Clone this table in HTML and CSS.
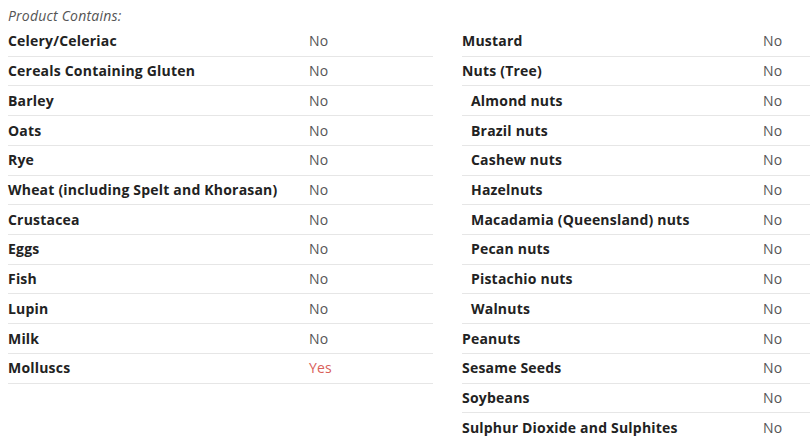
FILE: index.html
```html
<!DOCTYPE html>
<html>
<head>
<meta charset="utf-8">
<link rel="stylesheet" href="styles.css">
</head>
<body>
<div class="allergens">
  <div class="heading">Product Contains:</div>
  <div class="columns">
    <div class="table">
      <div class="row"><span class="label">Celery/Celeriac</span><span class="value">No</span></div>
      <div class="row"><span class="label">Cereals Containing Gluten</span><span class="value">No</span></div>
      <div class="row"><span class="label">Barley</span><span class="value">No</span></div>
      <div class="row"><span class="label">Oats</span><span class="value">No</span></div>
      <div class="row"><span class="label">Rye</span><span class="value">No</span></div>
      <div class="row"><span class="label">Wheat (including Spelt and Khorasan)</span><span class="value">No</span></div>
      <div class="row"><span class="label">Crustacea</span><span class="value">No</span></div>
      <div class="row"><span class="label">Eggs</span><span class="value">No</span></div>
      <div class="row"><span class="label">Fish</span><span class="value">No</span></div>
      <div class="row"><span class="label">Lupin</span><span class="value">No</span></div>
      <div class="row"><span class="label">Milk</span><span class="value">No</span></div>
      <div class="row"><span class="label">Molluscs</span><span class="value yes">Yes</span></div>
    </div>
    <div class="table">
      <div class="row"><span class="label">Mustard</span><span class="value">No</span></div>
      <div class="row"><span class="label">Nuts (Tree)</span><span class="value">No</span></div>
      <div class="row sub"><span class="label">Almond nuts</span><span class="value">No</span></div>
      <div class="row sub"><span class="label">Brazil nuts</span><span class="value">No</span></div>
      <div class="row sub"><span class="label">Cashew nuts</span><span class="value">No</span></div>
      <div class="row sub"><span class="label">Hazelnuts</span><span class="value">No</span></div>
      <div class="row sub"><span class="label">Macadamia (Queensland) nuts</span><span class="value">No</span></div>
      <div class="row sub"><span class="label">Pecan nuts</span><span class="value">No</span></div>
      <div class="row sub"><span class="label">Pistachio nuts</span><span class="value">No</span></div>
      <div class="row sub"><span class="label">Walnuts</span><span class="value">No</span></div>
      <div class="row"><span class="label">Peanuts</span><span class="value">No</span></div>
      <div class="row"><span class="label">Sesame Seeds</span><span class="value">No</span></div>
      <div class="row"><span class="label">Soybeans</span><span class="value">No</span></div>
      <div class="row"><span class="label">Sulphur Dioxide and Sulphites</span><span class="value">No</span></div>
    </div>
  </div>
</div>
</body>
</html>
```
FILE: styles.css
```css
html, body {
  margin: 0;
  padding: 0;
  background: #fff;
  overflow: hidden;
}
body {
  font-family: "Open Sans", "DejaVu Sans", sans-serif;
  font-size: 14px;
  letter-spacing: 0.2px;
  color: #333;
}
.allergens {
  padding: 6px 0 0 8px;
}
.heading {
  font-style: italic;
  color: #555;
  line-height: 20px;
  height: 21px;
}
.columns {
  display: grid;
  grid-template-columns: 425px 425px;
  column-gap: 29px;
  align-items: start;
}
.row {
  display: flex;
  align-items: center;
  height: 29.73px;
  box-sizing: border-box;
  border-bottom: 1px solid #e6e6e6;
  line-height: 20px;
}
.label {
  width: 301px;
  flex: none;
  font-weight: 700;
  color: #222;
  box-sizing: border-box;
}
.sub .label {
  padding-left: 9px;
}
.value {
  color: #555;
}
.value.yes {
  color: #d9605a;
}
```
